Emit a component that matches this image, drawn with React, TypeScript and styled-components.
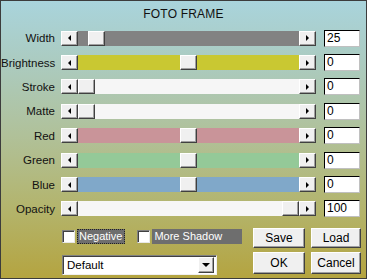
import React from "react";
import styled, { createGlobalStyle } from "styled-components";

const GlobalStyle = createGlobalStyle`
  html, body {
    margin: 0;
    padding: 0;
  }
  body {
    font-family: "Liberation Sans", Arial, sans-serif;
  }
`;

type SliderRow = {
  label: string;
  track: string;
  thumb: number; // thumb left offset inside the track, px
  value: string;
};

const rows: SliderRow[] = [
  { label: "Width", track: "#828282", thumb: 10, value: "25" },
  { label: "Brightness", track: "#c9c832", thumb: 102, value: "0" },
  { label: "Stroke", track: "#f6f6f6", thumb: 0, value: "0" },
  { label: "Matte", track: "#f6f6f6", thumb: 0, value: "0" },
  { label: "Red", track: "#c99499", thumb: 102, value: "0" },
  { label: "Green", track: "#94c998", thumb: 102, value: "0" },
  { label: "Blue", track: "#80a8c9", thumb: 102, value: "0" },
  { label: "Opacity", track: "#f6f6f6", thumb: 204, value: "100" },
];

const App = () => {
  return (
    <>
      <GlobalStyle />
      <Frame>
        <Title>FOTO FRAME</Title>
        <SliderList>
          {rows.map((r) => (
            <Row key={r.label}>
              <Label>{r.label}</Label>
              <ScrollBar>
                <ArrowButton>
                  <Arrow $dir="left" />
                </ArrowButton>
                <Track $color={r.track}>
                  <Thumb style={{ left: r.thumb }} />
                </Track>
                <ArrowButton>
                  <Arrow $dir="right" />
                </ArrowButton>
              </ScrollBar>
              <ValueBox>{r.value}</ValueBox>
            </Row>
          ))}
        </SliderList>
        <Footer>
          <LeftColumn>
            <CheckRow>
              <Check>
                <CheckBox />
                <CheckLabel $focused>Negative</CheckLabel>
              </Check>
              <Check>
                <CheckBox />
                <CheckLabel $wide>More Shadow</CheckLabel>
              </Check>
            </CheckRow>
            <Select>
              <span>Default</span>
              <SelectButton>
                <Arrow $dir="down" />
              </SelectButton>
            </Select>
          </LeftColumn>
          <ButtonGrid>
            <Button>Save</Button>
            <Button>Load</Button>
            <Button>OK</Button>
            <Button>Cancel</Button>
          </ButtonGrid>
        </Footer>
      </Frame>
    </>
  );
};

export default App;

const Frame = styled.div`
  box-sizing: border-box;
  width: 367px;
  height: 279px;
  border: 1px solid #3c3c3c;
  background: linear-gradient(
    180deg,
    #a9d4dc 0%,
    #abcbc0 22%,
    #b0c19a 48%,
    #b3b46c 75%,
    #b4a440 100%
  );
  display: flex;
  flex-direction: column;
  color: #000;
  font-size: 11px;
`;

const Title = styled.div`
  height: 24px;
  line-height: 26px;
  text-align: center;
  font-size: 12px;
  letter-spacing: 0.2px;
  color: #111;
`;

const SliderList = styled.div`
  display: flex;
  flex-direction: column;
  margin-top: 1px;
`;

const Row = styled.div`
  height: 24.4px;
  display: flex;
  align-items: center;
`;

const Label = styled.div`
  width: 54px;
  text-align: right;
  font-size: 11.5px;
  color: #111;
  margin-right: 6px;
`;

const ScrollBar = styled.div`
  width: 255px;
  height: 15px;
  display: flex;
`;

const bevel = `
  box-sizing: border-box;
  background: #f0f0f0;
  border-top: 1px solid #ffffff;
  border-left: 1px solid #ffffff;
  border-right: 1px solid #404040;
  border-bottom: 1px solid #404040;
  box-shadow: inset -1px -1px 0 #a0a0a0;
`;

const ArrowButton = styled.div`
  ${bevel}
  width: 17px;
  height: 15px;
  display: flex;
  align-items: center;
  justify-content: center;
  flex-shrink: 0;
`;

const Arrow = styled.div<{ $dir: "left" | "right" | "down" }>`
  width: 0;
  height: 0;
  border-style: solid;
  ${(p) =>
    p.$dir === "left"
      ? "border-width: 3px 3px 3px 0; border-color: transparent #000 transparent transparent;"
      : p.$dir === "right"
      ? "border-width: 3px 0 3px 3px; border-color: transparent transparent transparent #000;"
      : "border-width: 4px 4px 0 4px; border-color: #000 transparent transparent transparent;"}
`;

const Track = styled.div<{ $color: string }>`
  position: relative;
  flex: 1;
  height: 15px;
  background: ${(p) => p.$color};
`;

const Thumb = styled.div`
  ${bevel}
  position: absolute;
  top: 0;
  width: 17px;
  height: 15px;
`;

const ValueBox = styled.div`
  box-sizing: border-box;
  margin-left: 8px;
  width: 36px;
  height: 17px;
  background: #fff;
  border: 1px solid #000;
  border-right-color: #c0c0c0;
  border-bottom-color: #c0c0c0;
  font-size: 12px;
  line-height: 15px;
  padding-left: 2px;
`;

const Footer = styled.div`
  display: flex;
  margin-top: 7px;
  padding-left: 61px;
`;

const LeftColumn = styled.div`
  display: flex;
  flex-direction: column;
  width: 155px;
`;

const CheckRow = styled.div`
  display: flex;
  gap: 12px;
  margin-top: 1px;
  height: 15px;
  align-items: center;
`;

const Check = styled.div`
  display: flex;
  align-items: center;
  gap: 2px;
`;

const CheckBox = styled.div`
  box-sizing: border-box;
  width: 13px;
  height: 13px;
  background: #fff;
  border-top: 1px solid #808080;
  border-left: 1px solid #808080;
  border-right: 1px solid #e8e8e8;
  border-bottom: 1px solid #e8e8e8;
  box-shadow: inset 1px 1px 0 #404040;
`;

const CheckLabel = styled.div<{ $focused?: boolean; $wide?: boolean }>`
  box-sizing: border-box;
  background: #6e6e6e;
  color: #fff;
  font-size: 11px;
  height: 15px;
  line-height: 13px;
  padding: 0 2px 0 1px;
  width: ${(p) => (p.$wide ? "90px" : "auto")};
  border: 1px ${(p) => (p.$focused ? "dotted #222" : "solid #6e6e6e")};
`;

const Select = styled.div`
  box-sizing: border-box;
  margin-top: 11px;
  width: 155px;
  height: 20px;
  background: #fff;
  border-top: 1px solid #808080;
  border-left: 1px solid #808080;
  border-right: 1px solid #f0f0f0;
  border-bottom: 1px solid #f0f0f0;
  box-shadow: inset 1px 1px 0 #404040;
  display: flex;
  align-items: center;
  justify-content: space-between;
  padding: 0 2px 0 4px;
  font-size: 11.5px;
`;

const SelectButton = styled.div`
  ${bevel}
  width: 16px;
  height: 16px;
  display: flex;
  align-items: center;
  justify-content: center;
`;

const ButtonGrid = styled.div`
  margin-left: 36px;
  display: grid;
  grid-template-columns: 52px 50px;
  grid-template-rows: 20px 22px;
  column-gap: 6px;
  row-gap: 4px;
`;

const Button = styled.div`
  ${bevel}
  display: flex;
  align-items: center;
  justify-content: center;
  font-size: 12px;
  color: #000;
`;
